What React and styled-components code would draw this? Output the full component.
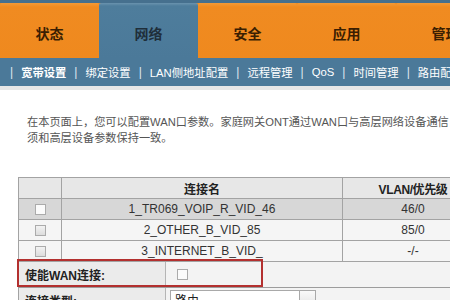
import React from "react";
import styled, { createGlobalStyle } from "styled-components";

const Global = createGlobalStyle`
  html, body { margin: 0; padding: 0; overflow: hidden; background: #ffffff; }
  body { font-family: "Liberation Sans", "Noto Sans CJK SC", sans-serif; width: 450px; height: 300px; }
`;

const Page = styled.div`
  width: 450px;
  height: 300px;
  overflow: hidden;
`;

const TopStrip = styled.div`
  height: 3px;
  background: #46708e;
`;

const TabBar = styled.div`
  display: flex;
  height: 55px;
  background: #f08a1f;
`;

const Tab = styled.div`
  flex: 0 0 99px;
  display: flex;
  align-items: center;
  justify-content: center;
  padding-top: 5px;
  box-sizing: border-box;
  font-family: "Noto Sans CJK SC", sans-serif;
  font-weight: 700;
  font-size: 14px;
  color: ${(p) => (p.$active ? "#1f2e3a" : "#3a1e02")};
  background: ${(p) =>
    p.$active
      ? "linear-gradient(#6a93ae 0px, #4e7d9c 3px, #4b7999 100%)"
      : "linear-gradient(#f39a37 0px, #f08b21 4px, #ef891e 100%)"};
  border-radius: 2px 2px 0 0;
`;

const SubNav = styled.div`
  display: flex;
  align-items: center;
  gap: 8px;
  height: 28px;
  padding-left: 10px;
  background: #4b7999;
  border-bottom: 4px solid #e6e6e6;
  white-space: nowrap;
  font-family: "Liberation Sans", "Noto Sans CJK SC", sans-serif;
  font-size: 11.3px;
  color: #ffffff;
`;

const Sep = styled.span`
  color: #dfe8ef;
  font-size: 12px;
`;

const NavItem = styled.span`
  font-weight: ${(p) => (p.$active ? 700 : 400)};
  color: #ffffff;
`;

const Intro = styled.p`
  margin: 24px 0 0 27px;
  font-size: 11.2px;
  line-height: 16px;
  color: #555555;
  white-space: nowrap;
`;

const Table = styled.table`
  margin: 31px 0 0 18px;
  width: 462px;
  border-collapse: collapse;
  table-layout: fixed;
  font-size: 12px;
  color: #333333;
`;

const Th = styled.th`
  height: 20px;
  padding: 0;
  border: 1px solid #a3a3a3;
  background: #e7e7e7;
  font-family: "Liberation Sans", "Noto Sans CJK SC", sans-serif;
  font-weight: 700;
  font-size: 12px;
  letter-spacing: ${(p) => (p.$tight ? "-0.4px" : "0")};
  color: #222222;
  text-align: center;
  width: ${(p) => p.$w}px;
`;

const Tr = styled.tr`
  background: ${(p) => (p.$selected ? "#d7d7d7" : "#f5f5f5")};
`;

const Td = styled.td`
  height: 20px;
  padding: 0;
  border: 1px solid #a3a3a3;
  text-align: center;
  vertical-align: middle;
`;

const Check = styled.span`
  display: inline-block;
  width: 9px;
  height: 9px;
  border: 1px solid #ababab;
  background: ${(p) =>
    p.$white ? "#fbfbfb" : "linear-gradient(#f3f3f3, #dcdcdc)"};
  vertical-align: middle;
`;

const Form = styled.div`
  margin-left: 18px;
  width: 500px;
  font-family: "Liberation Sans", "Noto Sans CJK SC", sans-serif;
  font-size: 12px;
`;

const FormRow = styled.div`
  position: relative;
  display: grid;
  grid-template-columns: 148px 1fr;
  height: 25px;
  border-bottom: 1px solid #9c9c9c;
`;

const Label = styled.div`
  display: flex;
  align-items: center;
  padding-left: 6px;
  background: #ebebeb;
  border-right: 1px solid #b5b5b5;
  border-left: 1px solid #a3a3a3;
  font-weight: 700;
  color: #222222;
`;

const Value = styled.div`
  display: flex;
  align-items: center;
  padding-left: 11px;
  background: #f3f3f3;
`;

const Select = styled.div`
  display: flex;
  align-items: center;
  justify-content: space-between;
  width: 146px;
  height: 19px;
  margin-left: -7px;
  margin-top: 2px;
  align-self: flex-start;
  border: 1px solid #a9a9a9;
  background: #ffffff;
  font-size: 12px;
  color: #222;
  padding-left: 4px;
  box-sizing: border-box;
`;

const SelectBtn = styled.span`
  width: 15px;
  height: 100%;
  border-left: 1px solid #a9a9a9;
  background: linear-gradient(#fafafa, #e2e2e2);
`;

const Highlight = styled.div`
  position: absolute;
  left: -1px;
  top: -3px;
  width: 246px;
  height: 28px;
  box-sizing: border-box;
  border: 2px solid #b3302f;
  pointer-events: none;
`;

const tabs = ["状态", "网络", "安全", "应用", "管理"];
const nav = ["宽带设置", "绑定设置", "LAN侧地址配置", "远程管理", "QoS", "时间管理", "路由配置"];
const rows = [
  { name: "1_TR069_VOIP_R_VID_46", vlan: "46/0", selected: true },
  { name: "2_OTHER_B_VID_85", vlan: "85/0" },
  { name: "3_INTERNET_B_VID_", vlan: "-/-" },
];

export default function App() {
  return (
    <Page>
      <Global />
      <TopStrip />
      <TabBar>
        {tabs.map((t) => (
          <Tab key={t} $active={t === "网络"}>
            {t}
          </Tab>
        ))}
      </TabBar>
      <SubNav>
        {nav.map((n, i) => (
          <React.Fragment key={n}>
            <Sep>|</Sep>
            <NavItem $active={i === 0}>{n}</NavItem>
          </React.Fragment>
        ))}
      </SubNav>
      <Intro>
        在本页面上，您可以配置WAN口参数。家庭网关ONT通过WAN口与高层网络设备通信，参数必
        <br />
        须和高层设备参数保持一致。
      </Intro>
      <Table>
        <thead>
          <tr>
            <Th $w={42}></Th>
            <Th $w={280}>连接名</Th>
            <Th $w={140} $tight>VLAN/优先级</Th>
          </tr>
        </thead>
        <tbody>
          {rows.map((r) => (
            <Tr key={r.name} $selected={r.selected}>
              <Td>
                <Check $white={r.selected} />
              </Td>
              <Td>{r.name}</Td>
              <Td>{r.vlan}</Td>
            </Tr>
          ))}
        </tbody>
      </Table>
      <Form>
        <FormRow>
          <Label>使能WAN连接:</Label>
          <Value>
            <Check $white />
          </Value>
          <Highlight />
        </FormRow>
        <FormRow>
          <Label>连接类型:</Label>
          <Value>
            <Select>
              路由
              <SelectBtn />
            </Select>
          </Value>
        </FormRow>
      </Form>
    </Page>
  );
}
